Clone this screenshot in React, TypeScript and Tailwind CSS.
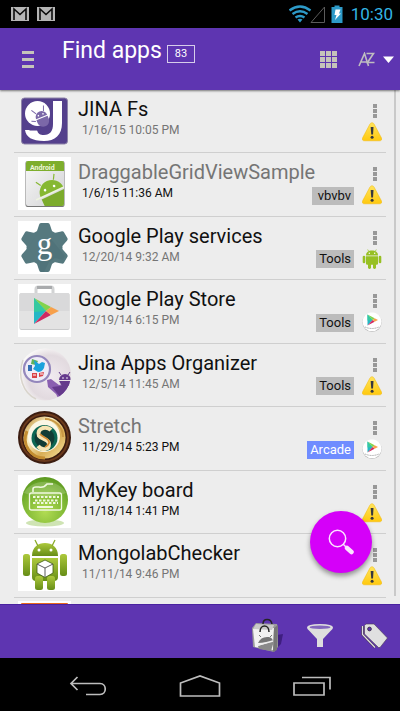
import type { ReactNode } from "react";

type Source = "warning" | "android" | "play";

interface AppEntry {
  name: string;
  date: string;
  icon: ReactNode;
  source: Source;
  tag?: string;
  dimName?: boolean;
  strongDate?: boolean;
}

function Icon({ children }: { children: ReactNode }) {
  return (
    <svg viewBox="0 0 53 53" className="block size-[53px] shrink-0" aria-hidden="true">
      {children}
    </svg>
  );
}

function JinaFsIcon() {
  return (
    <Icon>
      <rect x="3.5" y="4" width="46" height="46" rx="3" fill="#54408c" stroke="#8e84a8" strokeWidth="1" />
      <path d="M35 7h9v22c0 12-7 18-18 18-12 0-18-4-19-11h12c1 4 3 5 7 5 6 0 9-4 9-11z" fill="#fff" />
      <circle cx="19.500" cy="19.500" r="12.500" fill="#fff" />
      <path d="M8 33q10 6 22-2l-2 6H12z" fill="#54408c" opacity=".55" />
      <g fill="#7b68a8" transform="rotate(-22 24 24)">
        <path d="M18 23a6 6 0 0 1 12 0z" />
        <path d="M18 24h12v3a5 5 0 0 1-12 0z" />
        <path d="M20 18l-3-5M28 18l2-5M17 25l-4-2" stroke="#7b68a8" strokeWidth="1" />
        <circle cx="21.500" cy="20.500" r=".8" fill="#fff" />
        <circle cx="26.500" cy="20.500" r=".8" fill="#fff" />
      </g>
    </Icon>
  );
}

function SampleIcon() {
  return (
    <Icon>
      <defs>
        <linearGradient id="paper" x1="0" y1="0" x2="1" y2="1">
          <stop offset="0" stopColor="#f8f8f8" />
          <stop offset="1" stopColor="#d2d2d4" />
        </linearGradient>
        <clipPath id="paperClip"><rect x="8" y="4" width="38" height="45" rx="2" /></clipPath>
      </defs>
      <rect width="53" height="53" fill="#fff" />
      <rect x="7.500" y="4" width="39" height="46" rx="2" fill="#777" />
      <g clipPath="url(#paperClip)">
        <rect x="8" y="4" width="38" height="45" fill="url(#paper)" />
        <rect x="8" y="4" width="38" height="10" fill="#7eae2d" />
        <text x="12" y="13" fontFamily="Roboto, sans-serif" fontSize="7" fontWeight="700" fill="#eef6dc">Android</text>
        <g transform="rotate(-25 32 32)">
          <path d="M20 36a12 12 0 0 1 25 0z" fill="#86b832" />
          <path d="M20 38h26v20H20z" fill="#7cab2c" />
          <path d="M25 25l-3-5M39 25l3-5" stroke="#86b832" strokeWidth="1.200" />
          <circle cx="27" cy="31" r="1.300" fill="#fff" />
          <circle cx="37" cy="31" r="1.300" fill="#fff" />
        </g>
        <path d="M18 43l28-13" stroke="#eef4e0" strokeWidth="1.500" />
      </g>
    </Icon>
  );
}

function ServicesIcon() {
  return (
    <Icon>
      <rect width="53" height="53" fill="#fff" />
      <g fill="#56797f">
        <circle cx="26.500" cy="26.500" r="18" />
        {[0, 60, 120, 180, 240, 300].map((angle) => (
          <path key={angle} d="M18 13l3-9c.4-1.200 1-2 2-2h7c1 0 1.600.8 2 2l3 9z" transform={`rotate(${angle} 26.5 26.5)`} />
        ))}
      </g>
      <path d="M33 18l14 17-2 4-8-2-6 4-5 10h-4V36z" fill="#496b73" opacity=".4" />
      <text x="26.500" y="33" textAnchor="middle" fontFamily="Liberation Serif, serif" fontSize="31" fill="#fff">g</text>
    </Icon>
  );
}

function PlayTriangle() {
  return (
    <>
      <path d="M0 0v26l12-13z" fill="#25b7c5" />
      <path d="M0 0l17 9-5 4z" fill="#83d34c" />
      <path d="M0 26l12-13 5 4z" fill="#d02a62" />
      <path d="M17 9l8 4-8 4-5-4z" fill="#f7a04a" />
      <path d="M0 0l12 13L0 14z" fill="#35c9a0" />
    </>
  );
}

function PlayStoreIcon() {
  return (
    <Icon>
      <rect width="53" height="53" fill="#fff" />
      <path d="M18 11V5q0-2 2-2h13q2 0 2 2v6" fill="none" stroke="#d2d3d4" strokeWidth="3" />
      <path d="M19 3.500h15" stroke="#a9abad" strokeWidth="3" />
      <rect x="1.500" y="9" width="50" height="37" rx="2" fill="#c9cacb" />
      <rect x="1.500" y="9" width="50" height="36" rx="2" fill="#e3e3e3" />
      <path d="M1.500 11q0-2 2-2h46q2 0 2 2v16h-50z" fill="#d9d9da" />
      <g transform="translate(16 14)"><PlayTriangle /></g>
    </Icon>
  );
}

function OrganizerIcon() {
  return (
    <Icon>
      <defs>
        <radialGradient id="pearl" cx=".6" cy=".55" r=".6">
          <stop offset="0" stopColor="#f1ebf0" />
          <stop offset=".7" stopColor="#e2dadf" />
          <stop offset="1" stopColor="#fbfaf9" />
        </radialGradient>
        <clipPath id="pearlClip"><circle cx="27" cy="26.500" r="26" /></clipPath>
      </defs>
      <circle cx="27" cy="26.500" r="26" fill="url(#pearl)" />
      <path d="M5 12C-1 28 5 45 18 51" stroke="#d8d4cb" strokeWidth="1.500" fill="none" />
      <g clipPath="url(#pearlClip)">
        <path d="M29 32l4-1 8 6 12-3v5L41 52l-3-6-8-7z" fill="#8a5fb0" />
        <path d="M34 39l8-1 11-2v3L42 49z" fill="#653a8c" />
        <path d="M41 32a6 6 0 0 1 12 0z" fill="#653a8c" />
        <path d="M41 33h12v4l-8 3z" fill="#653a8c" />
        <path d="M43 27l-2-3M50 27l2-3" stroke="#653a8c" strokeWidth="1" />
        <circle cx="45" cy="30" r=".8" fill="#fff" />
        <circle cx="49" cy="30" r=".8" fill="#fff" />
      </g>
      <circle cx="19" cy="21" r="13" fill="#efecf7" stroke="#9487bc" strokeWidth="2.200" />
      <path d="M14 11l6 2-2 4-5-1z" fill="#62b35a" />
      <path d="M16 12l5 4 3-2 3 1-1 5q-2 4-6 4l-5-3 2-3z" fill="#1ba2dc" />
      <rect x="10" y="17" width="4" height="6" fill="#356fb4" />
      <path d="M14 25h5v5h-5zM21 25l5-1-1 4-4 1z" fill="#d94248" />
      <path d="M15 27h3M22 26h3" stroke="#fff" strokeWidth="1" />
    </Icon>
  );
}

function StretchIcon() {
  return (
    <Icon>
      <defs>
        <linearGradient id="gold" x1="0" y1="0" x2="1" y2="1">
          <stop offset="0" stopColor="#b88328" />
          <stop offset=".35" stopColor="#fbf0c4" />
          <stop offset=".65" stopColor="#d8ad55" />
          <stop offset="1" stopColor="#f9e6a3" />
        </linearGradient>
      </defs>
      <circle cx="26.500" cy="26.500" r="26.500" fill="#3b1c10" />
      <circle cx="26.500" cy="26.500" r="23.500" fill="none" stroke="#6b3a1c" strokeWidth="2" />
      <circle cx="26.500" cy="26.500" r="21" fill="url(#gold)" />
      <path d="M9 20a19 19 0 0 0 18 27" fill="none" stroke="#c48d31" strokeWidth="3" />
      <path d="M27 8a18 18 0 0 1 18 18" fill="none" stroke="#c99845" strokeWidth="2" />
      <circle cx="26" cy="25" r="16" fill="#fbf7e6" />
      <circle cx="26.500" cy="27" r="13" fill="#0d6753" />
      <circle cx="26.500" cy="27" r="10" fill="#123c35" />
      <path d="M33 19q-3-3-8-2-6 2-4 8c2 3 10 3 10 8 0 6-7 7-11 2" fill="none" stroke="#f7e5b4" strokeWidth="4" />
      <path d="M22 23c3 4 10 4 9 9q-1 3-4 4" fill="none" stroke="#d58d35" strokeWidth="1.800" />
    </Icon>
  );
}

function KeyboardIcon() {
  return (
    <Icon>
      <defs>
        <radialGradient id="green" cx=".5" cy=".75" r=".75">
          <stop offset="0" stopColor="#b2dc53" />
          <stop offset=".6" stopColor="#7fb834" />
          <stop offset="1" stopColor="#5b9820" />
        </radialGradient>
      </defs>
      <rect width="53" height="53" fill="#fff" />
      <ellipse cx="27" cy="48" rx="19" ry="3.500" fill="#cfe4b4" />
      <circle cx="27" cy="25" r="23" fill="url(#green)" />
      <path d="M6 18a22 16 0 0 1 42 0q-20 8-42 0" fill="#fff" opacity=".18" />
      <g fill="none" stroke="#eff8df">
        <rect x="11.500" y="18" width="32" height="17" rx="2" strokeWidth="1.300" />
        <path d="M15 17v-3q0-2 3-2h3q5 1 8-3h6" strokeWidth="1.600" />
        <path d="M15 22h26M17 25.500h24M15 28h25" strokeWidth="2" strokeDasharray="2.500 1.500" />
        <path d="M19 32h16" strokeWidth="2" />
      </g>
    </Icon>
  );
}

function MongolabIcon() {
  return (
    <Icon>
      <defs>
        <linearGradient id="robot" x1="0" y1="0" x2="0" y2="1">
          <stop offset="0" stopColor="#adc93c" />
          <stop offset="1" stopColor="#668d17" />
        </linearGradient>
      </defs>
      <rect width="53" height="53" fill="#fff" />
      <g fill="url(#robot)">
        <path d="M14 18C14 9 20 5 27 5s13 4 13 13z" />
        <path d="M14 20h26v19q0 4-4 4H18q-4 0-4-4z" />
        <rect x="5" y="16" width="7" height="22" rx="2.500" />
        <rect x="42" y="16" width="7" height="22" rx="2.500" />
        <rect x="17" y="38" width="8" height="14" rx="2.500" />
        <rect x="29" y="38" width="8" height="14" rx="2.500" />
      </g>
      <path d="M20 8l-3-6M34 8l3-6" stroke="#8aab2a" strokeWidth="1.300" />
      <circle cx="21" cy="12" r="1.500" fill="#fff" />
      <circle cx="33" cy="12" r="1.500" fill="#fff" />
      <path d="M27 22l8 4v9l-8 4.500-8-4.500v-9z" fill="#fff" stroke="#3c5b12" strokeWidth=".8" />
      <path d="M19 26l8 4 8-4M27 30v9" fill="none" stroke="#4a4a4a" strokeWidth=".9" />
    </Icon>
  );
}

function OrangeIcon() {
  return (
    <Icon>
      <rect width="53" height="53" fill="#fff" />
      <rect x="3" y="2" width="47" height="50" rx="1" fill="#e8661c" />
    </Icon>
  );
}

const apps: AppEntry[] = [
  { name: "JINA Fs", date: "1/16/15 10:05 PM", icon: <JinaFsIcon />, source: "warning" },
  { name: "DraggableGridViewSample", date: "1/6/15 11:36 AM", icon: <SampleIcon />, source: "warning", tag: "vbvbv", dimName: true, strongDate: true },
  { name: "Google Play services", date: "12/20/14 9:32 AM", icon: <ServicesIcon />, source: "android", tag: "Tools" },
  { name: "Google Play Store", date: "12/19/14 6:15 PM", icon: <PlayStoreIcon />, source: "play", tag: "Tools" },
  { name: "Jina Apps Organizer", date: "12/5/14 11:45 AM", icon: <OrganizerIcon />, source: "warning", tag: "Tools" },
  { name: "Stretch", date: "11/29/14 5:23 PM", icon: <StretchIcon />, source: "play", tag: "Arcade", dimName: true, strongDate: true },
  { name: "MyKey board", date: "11/18/14 1:41 PM", icon: <KeyboardIcon />, source: "warning", strongDate: true },
  { name: "MongolabChecker", date: "11/11/14 9:46 PM", icon: <MongolabIcon />, source: "warning" },
];

function SourceBadge({ source }: { source: Source }) {
  if (source === "warning") {
    return (
      <svg viewBox="0 0 20 20" className="block size-5" aria-label="Warning" role="img">
        <defs>
          <linearGradient id="amber" x1="0" y1="0" x2="0" y2="1">
            <stop offset="0" stopColor="#ffe45c" />
            <stop offset="1" stopColor="#ffc90e" />
          </linearGradient>
        </defs>
        <path d="M10 .8c1 0 1.700.6 2.200 1.500l7.200 13.500c.8 1.800 0 3-1.600 3H2.200c-1.600 0-2.400-1.200-1.600-3L7.800 2.300C8.300 1.400 9 .8 10 .8z" fill="url(#amber)" stroke="#f3b90b" strokeWidth=".5" />
        <path d="M8.700 5h2.800l-.5 7.500H9.200z" fill="#36383f" />
        <circle cx="10.100" cy="15.200" r="1.500" fill="#36383f" />
      </svg>
    );
  }
  if (source === "android") {
    return (
      <svg viewBox="0 0 20 20" className="block size-5" aria-label="System" role="img">
        <g fill="#97c024">
          <path d="M4 6.500C4 3 6.500 1.500 10 1.500s6 1.500 6 5z" />
          <path d="M4 7.300h12v7.200q0 1.300-1.300 1.300H5.300Q4 15.800 4 14.500z" />
          <rect x=".7" y="6.800" width="2.600" height="7.500" rx="1.300" />
          <rect x="16.700" y="6.800" width="2.600" height="7.500" rx="1.300" />
          <rect x="6" y="13" width="3" height="7" rx="1.400" />
          <rect x="11" y="13" width="3" height="7" rx="1.400" />
        </g>
        <path d="M6.800 2.500L5.700.5M13.200 2.500l1.100-2" stroke="#97c024" strokeWidth=".7" />
        <circle cx="7.300" cy="4.300" r=".7" fill="#fff" />
        <circle cx="12.700" cy="4.300" r=".7" fill="#fff" />
      </svg>
    );
  }
  return (
    <svg viewBox="0 0 20 20" className="block size-5" aria-label="Play Store" role="img">
      <circle cx="10" cy="10.400" r="9.600" fill="#b9b9b9" />
      <circle cx="10" cy="9.800" r="9.500" fill="#fff" />
      <g transform="translate(5.500 2.500) scale(.42)"><PlayTriangle /></g>
      <path d="M3 15q7 3 14 0" fill="none" stroke="#aaa" strokeWidth="1" strokeDasharray="1.200 .5" />
    </svg>
  );
}

function AppRow({ app }: { app: AppEntry }) {
  return (
    <li className="flex border-b border-[#cfcfcf] pl-1 odd:h-[63px] even:h-16">
      <div className="pt-1">{app.icon}</div>
      <div className="flex min-w-0 flex-1 flex-col pt-[7px] pl-[7px]">
        <h2 className={`truncate text-[20px] leading-6 ${app.dimName ? "text-[#757575]" : "text-[#111]"}`}>{app.name}</h2>
        <p className={`pl-1 text-[12px] leading-[18px] ${app.strongDate ? "text-[#111]" : "text-[#757575]"}`}>{app.date}</p>
      </div>
      <div className="-ml-20 flex items-end pr-2 pb-[11px]">
        {app.tag && (
          <span className={`pr-[3px] text-[13px] leading-[18px] ${app.tag === "Arcade" ? "bg-[#6f8cff] text-white" : "bg-[#bcbcbc] text-[#111]"} ${app.tag === "vbvbv" ? "pl-[6px]" : "pl-[3px]"}`}>
            {app.tag}
          </span>
        )}
      </div>
      <div className="mr-1 flex w-5 shrink-0 flex-col items-center pt-3.5">
        <button type="button" aria-label={`Options for ${app.name}`} className="mb-1 ml-1.5 flex flex-col gap-px">
          <span className="size-1 bg-[#989898]" />
          <span className="size-1 bg-[#989898]" />
          <span className="size-1 bg-[#989898]" />
        </button>
        <SourceBadge source={app.source} />
      </div>
    </li>
  );
}

function MailIcon() {
  return (
    <svg viewBox="0 0 18 14" className="h-3.5 w-[18px]" aria-hidden="true">
      <rect width="18" height="14" fill="#b5b5b5" />
      <path d="M3 13V2L9 7.500L15 2v11" fill="none" stroke="#0b0b0b" strokeWidth="1.600" />
    </svg>
  );
}

function StatusBar() {
  return (
    <div className="flex h-7 shrink-0 items-center bg-black pr-[7px] pl-[11px]">
      <div className="flex flex-1 gap-2">
        <MailIcon />
        <MailIcon />
      </div>
      <svg viewBox="0 0 56 20" className="h-5 w-14" aria-hidden="true">
        <g fill="none" stroke="#2d9ac8" strokeWidth="2.400">
          <path d="M.5 6.500q10.500-8 21 0" />
          <path d="M3.500 10q7.500-5.500 15 0" />
          <path d="M6.500 13.500q4.500-3.200 9 0" />
        </g>
        <path d="M8.500 15.500q2.500-1.600 5 0L11 18.500z" fill="#2d9ac8" />
        <path d="M22 18.500L35.500 3v15.500z" fill="none" stroke="#5b5b5b" strokeWidth="1" />
        <path d="M42.500 3h3V1.500h5V3h3v16h-11z" fill="#2d9ac8" />
        <path d="M46.500 5.500h5l-1.500 4h2l-6 6.500 1.500-5h-2z" fill="#fff" />
      </svg>
      <time className="pl-1.5 text-[17px] leading-7 text-[#33b5e5]">10:30</time>
    </div>
  );
}

function Header() {
  return (
    <header className="z-10 flex h-[62px] shrink-0 items-center bg-[#5e35b1] pr-1.5 pl-[22px] shadow-[0_1px_2px_rgba(0,0,0,0.5)]">
      <button type="button" aria-label="Menu" className="flex w-3 flex-col gap-1">
        <span className="h-[3px] bg-[#c5c4ba]" />
        <span className="h-[3px] bg-[#c5c4ba]" />
        <span className="h-[3px] bg-[#c5c4ba]" />
      </button>
      <div className="flex flex-1 gap-[5px] self-start pt-2 pl-[28px]">
        <h1 className="text-[23px] leading-[30px] text-white">Find apps</h1>
        <span className="mt-[9px] h-[18px] w-7 border border-[#d6cdea] text-center text-[11px] leading-4 text-white">83</span>
      </div>
      <button type="button" aria-label="Grid view" className="grid grid-cols-3 gap-px">
        {Array.from({ length: 9 }, (_, i) => (
          <span key={i} className="size-[5px] bg-[#c5c4ba]" />
        ))}
      </button>
      <button type="button" aria-label="Sort by name" className="ml-[21px] flex items-center gap-2">
        <svg viewBox="0 0 17 15" className="h-[15px] w-[17px]" fill="none" stroke="#bfbdc0" strokeWidth="1.600" aria-hidden="true">
          <path d="M1 14L6.500 1.500L10.500 14M3 10h6" />
          <path d="M8.500 1.500h7L9.500 10.500h7" />
        </svg>
        <svg viewBox="0 0 11 7" className="h-[7px] w-[11px]" aria-hidden="true">
          <path d="M0 .5h11L5.500 7z" fill="#fff" />
        </svg>
      </button>
    </header>
  );
}

function BottomBar() {
  return (
    <footer className="flex h-[54px] shrink-0 items-center justify-end gap-5 border-t border-[#4a23a0] bg-[#5e35b1] pt-2 pr-3">
      <button type="button" aria-label="Open store" className="pr-0.5">
        <svg viewBox="0 0 32 36" className="h-9 w-8" aria-hidden="true">
          <path d="M25 17l6-1-2 10-6 6z" fill="#3e1e80" />
          <path d="M0 10l4-5 21 1 1 5v18l-4 5-21-5z" fill="#9b9b9b" />
          <path d="M1 11l21-1-1 22-18-3z" fill="#f2f2f2" />
          <path d="M22 10l4-3-1 25-4 2z" fill="#777" />
          <path d="M4 6l18 1-2 5-19-1z" fill="#c9c9c9" />
          <path d="M11 6c0-6 8-6 9 0M8 14c0-8 9-8 9 0" fill="none" stroke="#242424" strokeWidth="1.500" />
          <path d="M6 25q3-7 11-6 4 1 4 5z" fill="#777" />
          <path d="M6 28l16-5-3 10-12-2z" fill="#8a8a8a" />
          <path d="M9 19l-2-2M18 19l2-2" stroke="#777" strokeWidth="1" />
          <path d="M6 27l15-4" stroke="#eee" strokeWidth="1.300" />
        </svg>
      </button>
      <button type="button" aria-label="Filter">
        <svg viewBox="0 0 28 26" className="h-[26px] w-7" aria-hidden="true">
          <path d="M1 4.500Q1 1 14 1t13 3.500q0 1.500-2 3L17 16v8h-6v-8L3 7.500Q1 6 1 4.500z" fill="#dedede" />
          <ellipse cx="14" cy="4.300" rx="10.500" ry="1.700" fill="#8266bd" />
        </svg>
      </button>
      <button type="button" aria-label="Tags" className="pl-1.5">
        <svg viewBox="0 0 28 26" className="h-[26px] w-7" aria-hidden="true">
          <path d="M2.500 3v8.500L15 24.500" fill="none" stroke="#4c3b55" strokeWidth="2.400" />
          <path d="M2.500 3v8.500L15 24.500" fill="none" stroke="#e0e0e0" strokeWidth="1.200" />
          <path d="M4.500 2.500L6 1h8l13.500 14-7.500 9.500h-1.500L4.500 11z" fill="#e0e0e0" stroke="#4c3b55" strokeWidth=".6" />
          <circle cx="9.500" cy="6" r="1.900" fill="#5e35b1" stroke="#3a2d44" strokeWidth=".8" />
        </svg>
      </button>
    </footer>
  );
}

function NavBar() {
  return (
    <nav className="flex h-[53px] shrink-0 items-center justify-center gap-[72px] bg-black pt-0.5" aria-label="System">
      <button type="button" aria-label="Back">
        <svg viewBox="0 0 38 20" className="h-5 w-[38px]" fill="none" stroke="#bdbdbd" strokeWidth="1.700" aria-hidden="true">
          <path d="M8.500 1L2 7.500L8.500 14M2 7.500h29c7 0 7 11 0 11H17" />
        </svg>
      </button>
      <button type="button" aria-label="Home">
        <svg viewBox="0 0 42 22" className="h-[22px] w-[42px]" fill="none" stroke="#bdbdbd" strokeWidth="1.700" aria-hidden="true">
          <path d="M1.500 21V8L21 1l19.500 7v13z" />
        </svg>
      </button>
      <button type="button" aria-label="Recent apps">
        <svg viewBox="0 0 38 20" className="h-5 w-[38px]" fill="none" stroke="#bdbdbd" strokeWidth="1.700" aria-hidden="true">
          <path d="M1 7h30v12H1zM9 1.500h28v12" />
        </svg>
      </button>
    </nav>
  );
}

export default function App() {
  return (
    <div className="flex h-screen flex-col overflow-hidden bg-black font-[Roboto,sans-serif]">
      <StatusBar />
      <Header />
      <main className="relative flex min-h-0 flex-1 overflow-hidden bg-[#ededed]">
        <ul className="min-w-0 flex-1 pr-2 pl-3.5">
          {apps.map((app) => (
            <AppRow key={app.name} app={app} />
          ))}
          <li className="pt-[3px] pl-1">
            <OrangeIcon />
          </li>
        </ul>
        <div className="mr-1 mb-2 w-0.5 bg-[#c9c9c9]" />
        <button
          type="button"
          aria-label="Search"
          className="absolute right-7 bottom-[31px] flex size-[62px] items-center justify-center rounded-full bg-[#d500f9] shadow-[0_3px_5px_rgba(0,0,0,0.4)]"
        >
          <svg viewBox="0 0 26 26" className="size-[26px]" aria-hidden="true">
            <circle cx="9.500" cy="9.500" r="8.200" fill="none" stroke="#fbe3ff" strokeWidth="1.500" />
            <path d="M15 15l4 4" stroke="#fbe3ff" strokeWidth="1.500" />
            <path d="M19 19l4.500 4" stroke="#fbe3ff" strokeWidth="4.500" strokeLinecap="round" />
          </svg>
        </button>
      </main>
      <BottomBar />
      <NavBar />
    </div>
  );
}
